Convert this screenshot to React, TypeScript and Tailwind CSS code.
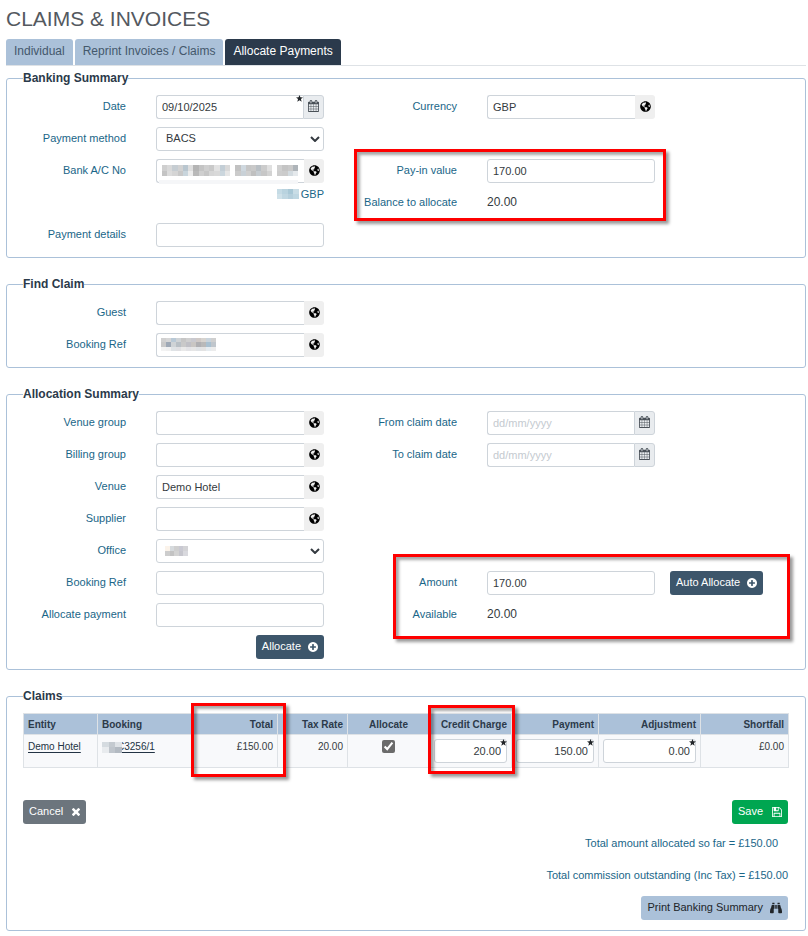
import { useState } from "react";
import type { ReactNode } from "react";
import { FaBinoculars, FaGlobeAmericas } from "react-icons/fa";

interface IconProps {
  className?: string;
}

interface Claim {
  entity: string;
  booking: string;
  total: string;
  taxRate: string;
  allocate: boolean;
  creditCharge: string;
  payment: string;
  adjustment: string;
  shortfall: string;
}

const claims: Claim[] = [
  {
    entity: "Demo Hotel",
    booking: "C3256/1",
    total: "£150.00",
    taxRate: "20.00",
    allocate: true,
    creditCharge: "20.00",
    payment: "150.00",
    adjustment: "0.00",
    shortfall: "£0.00",
  },
];

const tabs = ["Individual", "Reprint Invoices / Claims", "Allocate Payments"];

const inputClass =
  "block h-6 w-full min-w-0 rounded-[3px] border border-[#ced4da] bg-white px-[5px] pb-px text-[11px] text-[#343a40] outline-none placeholder:text-[#c4cad0]";
const cellClass = "border border-[#dee2e6] px-1";

function CalendarIcon({ className }: IconProps) {
  return (
    <svg viewBox="0 0 1664 1792" fill="currentColor" className={className} aria-hidden="true">
      <path d="M128 1664h288v-288h-288v288zm352 0h320v-288h-320v288zm-352-352h288v-320h-288v320zm352 0h320v-320h-320v320zm-352-384h288v-288h-288v288zm736 736h320v-288h-320v288zm-384-736h320v-288h-320v288zm768 736h288v-288h-288v288zm-384-352h320v-320h-320v320zm-352-864v-288q0-13-9.5-22.5t-22.5-9.5h-64q-13 0-22.5 9.5t-9.5 22.5v288q0 13 9.5 22.5t22.5 9.5h64q13 0 22.5-9.5t9.5-22.5zm736 864h288v-320h-288v320zm-384-384h320v-288h-320v288zm384 0h288v-288h-288v288zm32-480v-288q0-13-9.5-22.5t-22.5-9.5h-64q-13 0-22.5 9.5t-9.5 22.5v288q0 13 9.5 22.5t22.5 9.5h64q13 0 22.5-9.5t9.5-22.5zm384-64v1280q0 52-38 90t-90 38h-1408q-52 0-90-38t-38-90v-1280q0-52 38-90t90-38h128v-96q0-66 47-113t113-47h64q66 0 113 47t47 113v96h384v-96q0-66 47-113t113-47h64q66 0 113 47t47 113v96h128q52 0 90 38t38 90z" />
    </svg>
  );
}

function FloppyIcon({ className }: IconProps) {
  return (
    <svg viewBox="128 128 1536 1536" fill="currentColor" className={className} aria-hidden="true">
      <path d="M512 1536h768v-384h-768v384zm896 0h128v-896q0-14-10-38.5t-20-34.5l-281-281q-10-10-34-20t-39-10v416q0 40-28 68t-68 28h-576q-40 0-68-28t-28-68v-416h-128v1280h128v-416q0-40 28-68t68-28h832q40 0 68 28t28 68v416zm-384-928v-320q0-13-9.5-22.5t-22.5-9.5h-192q-13 0-22.5 9.5t-9.5 22.5v320q0 13 9.5 22.5t22.5 9.5h192q13 0 22.5-9.5t9.5-22.5zm640 32v928q0 40-28 68t-68 28h-1344q-40 0-68-28t-28-68v-1344q0-40 28-68t68-28h928q40 0 88 20t76 48l280 280q28 28 48 76t20 88z" />
    </svg>
  );
}

function TimesIcon({ className }: IconProps) {
  return (
    <svg viewBox="302 366 1188 1188" fill="currentColor" className={className} aria-hidden="true">
      <path d="M1490 1322q0 40-28 68l-136 136q-28 28-68 28t-68-28l-294-294-294 294q-28 28-68 28t-68-28l-136-136q-28-28-28-68t28-68l294-294-294-294q-28-28-28-68t28-68l136-136q28-28 68-28t68 28l294 294 294-294q28-28 68-28t68 28l136 136q28 28 28 68t-28 68l-294 294 294 294q28 28 28 68z" />
    </svg>
  );
}

function PlusCircleIcon({ className }: IconProps) {
  return (
    <svg viewBox="128 128 1536 1536" fill="currentColor" className={className} aria-hidden="true">
      <path d="M1344 960v-128q0-26-19-45t-45-19h-256v-256q0-26-19-45t-45-19h-128q-26 0-45 19t-19 45v256h-256q-26 0-45 19t-19 45v128q0 26 19 45t45 19h256v256q0 26 19 45t45 19h128q26 0 45-19t19-45v-256h256q26 0 45-19t19-45zm320-64q0 209-103 385.5t-279.5 279.5-385.5 103-385.5-103-279.5-279.5-103-385.5 103-385.5 279.5-279.5 385.5-103 385.5 103 279.5 279.5 103 385.5z" />
    </svg>
  );
}

// Blocks that hide a private value. Each row is a list of colours.
function Mosaic({ rows, className }: { rows: string[][]; className: string }) {
  return (
    <div className={`flex flex-col ${className}`} aria-hidden="true">
      {rows.map((row, i) => (
        <div key={i} className="flex flex-1">
          {row.map((color, j) => (
            <div key={j} className="flex-1" style={{ backgroundColor: color }} />
          ))}
        </div>
      ))}
    </div>
  );
}

function Panel({ title, className = "", children }: { title: string; className?: string; children: ReactNode }) {
  return (
    <fieldset className={`min-w-0 rounded-[3px] border border-[#abc1d9] pt-[9px] pr-[17px] pb-[10px] pl-4 ${className}`}>
      <legend className="text-xs leading-4 font-bold text-[#2b3a4a]">{title}</legend>
      {children}
    </fieldset>
  );
}

function FormGrid({ children }: { children: ReactNode }) {
  return <div className="grid grid-cols-[133fr_168fr_163fr_168fr_133fr] gap-y-2">{children}</div>;
}

function Label({ htmlFor, className, children }: { htmlFor: string; className: string; children: ReactNode }) {
  return (
    <label htmlFor={htmlFor} className={`h-6 pr-[30px] text-right text-[11px] leading-[22px] whitespace-nowrap text-[#1a6688] ${className}`}>
      {children}
    </label>
  );
}

function LookupInput({ id, value = "", children }: { id: string; value?: string; children?: ReactNode }) {
  return (
    <div className="relative flex h-6 w-full">
      <input id={id} defaultValue={value} className={`${inputClass} rounded-r-none border-r-0`} />
      <button type="button" aria-label="Look up" className="flex w-5 shrink-0 items-center justify-center rounded-r-[3px] bg-[#efefef] pb-[2px] text-black">
        <FaGlobeAmericas className="size-[11px]" />
      </button>
      {children}
    </div>
  );
}

function DateInput({ id, value = "", required = false }: { id: string; value?: string; required?: boolean }) {
  return (
    <div className="relative flex h-6 w-full">
      <input id={id} defaultValue={value} placeholder="dd/mm/yyyy" className={`${inputClass} rounded-r-none border-r-0`} />
      {required && <Star className="right-[21px]" />}
      <button type="button" aria-label="Open calendar" className="flex w-[21px] shrink-0 items-center justify-center rounded-r-[3px] border border-[#ced4da] bg-[#e9ecef] pb-[2px] text-[#495057]">
        <CalendarIcon className="h-3 w-[11px]" />
      </button>
    </div>
  );
}

function Select({ id, options, children }: { id: string; options: string[]; children?: ReactNode }) {
  return (
    <div className="relative h-6 w-full">
      <select id={id} className={`${inputClass} appearance-none pl-[9px]`}>
        {options.map((option) => (
          <option key={option}>{option}</option>
        ))}
      </select>
      <svg viewBox="0 0 10 6" className="pointer-events-none absolute top-[9px] right-1 h-[6px] w-[10px]" fill="none" stroke="#343a40" strokeWidth="2" aria-hidden="true">
        <path d="M1 1l4 4 4-4" />
      </svg>
      {children}
    </div>
  );
}

function Star({ className }: IconProps) {
  return (
    <svg viewBox="0 0 10 10" className={`pointer-events-none absolute top-0 size-[7px] ${className}`} fill="#212529" aria-hidden="true">
      <path d="M5 0l1.3 3.3 3.7.2-2.9 2.3 1 3.7L5 7.5 1.900 9.500l1-3.700L0 3.500l3.700-.2z" />
    </svg>
  );
}

// Red frame drawn over the form
function Highlight({ className }: IconProps) {
  return (
    <div className={`pointer-events-none absolute z-10 border-[3px] border-[#fe0000] shadow-[3px_3px_3px_rgba(0,0,0,0.4),inset_3px_3px_3px_rgba(0,0,0,0.35)] ${className}`} />
  );
}

function Button({ className, children }: { className: string; children: ReactNode }) {
  return (
    <button type="button" className={`flex h-6 shrink-0 items-center rounded-[3px] px-[6px] pb-px text-[11px] whitespace-nowrap ${className}`}>
      {children}
    </button>
  );
}

export default function App() {
  const [activeTab, setActiveTab] = useState("Allocate Payments");

  return (
    <div className="bg-white pt-[6px] pr-[2px] pb-[5px] pl-[6px] font-['Liberation_Sans',Arial,sans-serif] text-[#343a40]">
      <h1 className="text-[21px] leading-[26px] text-[#54595f]">CLAIMS &amp; INVOICES</h1>

      <div role="tablist" className="mt-[7px] flex gap-[2px] border-b border-[#dee2e6] text-xs">
        {tabs.map((tab) => (
          <button
            key={tab}
            role="tab"
            type="button"
            aria-selected={tab === activeTab}
            onClick={() => setActiveTab(tab)}
            className={`h-[26px] rounded-t-[3px] px-2 pb-[2px] ${
              tab === activeTab ? "bg-[#2b3a4c] text-white" : "bg-[#abc1d9] text-[#44586c]"
            }`}
          >
            {tab}
          </button>
        ))}
      </div>

      <Panel title="Banking Summary" className="mt-1">
        <FormGrid>
          <Label htmlFor="date" className="col-start-1 row-start-1">Date</Label>
          <div className="col-start-2 row-start-1">
            <DateInput id="date" value="09/10/2025" required />
          </div>
          <Label htmlFor="currency" className="col-start-3 row-start-1">Currency</Label>
          <div className="col-start-4 row-start-1">
            <LookupInput id="currency" value="GBP" />
          </div>

          <Label htmlFor="method" className="col-start-1 row-start-2">Payment method</Label>
          <div className="col-start-2 row-start-2">
            <Select id="method" options={["BACS", "Cheque"]} />
          </div>

          <Label htmlFor="account" className="col-start-1 row-start-3">Bank A/C No</Label>
          <div className="col-start-2 row-span-2 row-start-3 flex flex-col items-end">
            <LookupInput id="account">
              <Mosaic
                className="absolute top-[6px] left-[6px] h-[11px] w-[136px]"
                rows={[
                  ["#cfcfcf", "#d9d9d9", "#c6cdd2", "#d2d2d2", "#b9c6cf", "#dedede", "#b4b4b4", "#c4c4c4", "#cfcfcf", "#c9c9c9", "#e2e2e2", "#c3ced6", "#d9d9d9", "#fff", "#c2c2c2", "#cfd8df", "#c6c6c6", "#c9c9c9", "#b9bfc4", "#ccc", "#e0e0e0", "#fff", "#d0d0d0", "#c4c4c4", "#c9c9c9", "#aeb4b9"],
                  ["#c4c4c4", "#dcdcdc", "#d5d5d5", "#c8c8c8", "#c9d5dc", "#ececec", "#b9b9b9", "#cfcfcf", "#c6c6c6", "#d6d6d6", "#d9d9d9", "#cbd6dd", "#e6e6e6", "#fff", "#cbcbcb", "#c9d1d7", "#d0d0d0", "#c0c0c0", "#c6ccd1", "#c7c7c7", "#d3d3d3", "#fff", "#cdcdcd", "#cbcbcb", "#d3dbe0", "#e5e9ec"],
                ]}
              />
              <div className="absolute top-[21px] left-[3px] h-1 w-[139px] bg-[#f5f6f8]" />
            </LookupInput>
            <div className="mt-1 flex h-[14px] items-center text-[11px] leading-[14px] text-[#1a6688]">
              <Mosaic
                className="relative -mr-[9px] h-[10px] w-[22px]"
                rows={[
                  ["#c5dbe5", "#b9d3df", "#a9c8d6", "#c9dde6"],
                  ["#cfe1e9", "#c0d7e2", "#b5cfdc", "#bfd7e2"],
                ]}
              />
              C GBP
            </div>
          </div>

          <Label htmlFor="payIn" className="col-start-3 row-start-3">Pay-in value</Label>
          <div className="col-start-4 row-start-3">
            <input id="payIn" defaultValue="170.00" className={inputClass} />
          </div>
          <Label htmlFor="balance" className="col-start-3 row-start-4">Balance to allocate</Label>
          <output id="balance" className="col-start-4 row-start-4 text-xs leading-[22px]">20.00</output>
          <div className="pointer-events-none relative col-span-2 col-start-3 row-span-2 row-start-3">
            <Highlight className="-top-[10px] -right-[11px] -bottom-[6px] left-[30px]" />
          </div>

          <Label htmlFor="details" className="col-start-1 row-start-5">Payment details</Label>
          <div className="col-start-2 row-start-5">
            <input id="details" className={inputClass} />
          </div>
        </FormGrid>
      </Panel>

      <Panel title="Find Claim" className="mt-[18px]">
        <FormGrid>
          <Label htmlFor="guest" className="col-start-1">Guest</Label>
          <div className="col-start-2">
            <LookupInput id="guest" />
          </div>
          <Label htmlFor="findRef" className="col-start-1">Booking Ref</Label>
          <div className="col-start-2">
            <LookupInput id="findRef">
              <Mosaic
                className="absolute top-[5px] left-[5px] h-[13px] w-[55px]"
                rows={[
                  ["#d0d0d0", "#d6d6d6", "#b9c9d6", "#cfd3d6", "#c6c6c6", "#cfcfcf", "#c9c9cf", "#cfc9c6", "#d6d3cf", "#c9d3db", "#cfcfcf"],
                  ["#c9c9c9", "#9fa9b6", "#cfd3d6", "#b9c0c6", "#c9c9c9", "#c0c0c6", "#c9c6c3", "#b0b0b3", "#b9b9b9", "#a9c0d0", "#c0c6cc"],
                  ["#f3f3f3", "#f0f0f0", "#dfe3e6", "#e0e0e3", "#e9e9e9", "#e3e3e6", "#e6e6e6", "#e0e3e6", "#e3e3e3", "#e6ecf0", "#ececec"],
                ]}
              />
            </LookupInput>
          </div>
        </FormGrid>
      </Panel>

      <Panel title="Allocation Summary" className="mt-[18px]">
        <FormGrid>
          <Label htmlFor="venueGroup" className="col-start-1 row-start-1">Venue group</Label>
          <div className="col-start-2 row-start-1">
            <LookupInput id="venueGroup" />
          </div>
          <Label htmlFor="fromDate" className="col-start-3 row-start-1">From claim date</Label>
          <div className="col-start-4 row-start-1">
            <DateInput id="fromDate" />
          </div>

          <Label htmlFor="billingGroup" className="col-start-1 row-start-2">Billing group</Label>
          <div className="col-start-2 row-start-2">
            <LookupInput id="billingGroup" />
          </div>
          <Label htmlFor="toDate" className="col-start-3 row-start-2">To claim date</Label>
          <div className="col-start-4 row-start-2">
            <DateInput id="toDate" />
          </div>

          <Label htmlFor="venue" className="col-start-1 row-start-3">Venue</Label>
          <div className="col-start-2 row-start-3">
            <LookupInput id="venue" value="Demo Hotel" />
          </div>
          <Label htmlFor="supplier" className="col-start-1 row-start-4">Supplier</Label>
          <div className="col-start-2 row-start-4">
            <LookupInput id="supplier" />
          </div>
          <Label htmlFor="office" className="col-start-1 row-start-5">Office</Label>
          <div className="col-start-2 row-start-5">
            <Select id="office" options={[""]}>
              <Mosaic
                className="pointer-events-none absolute top-[7px] left-[9px] h-[10px] w-[23px]"
                rows={[
                  ["#fbf3ea", "#d6dadd", "#cfcfcf", "#c9c9d2", "#d3d3d6"],
                  ["#cdcdcd", "#c3c3c3", "#d3d3d3", "#c6c6cd", "#d9d9de"],
                ]}
              />
            </Select>
          </div>

          <Label htmlFor="bookingRef" className="col-start-1 row-start-6">Booking Ref</Label>
          <div className="col-start-2 row-start-6">
            <input id="bookingRef" className={inputClass} />
          </div>
          <Label htmlFor="amount" className="col-start-3 row-start-6">Amount</Label>
          <div className="col-start-4 row-start-6">
            <input id="amount" defaultValue="170.00" className={inputClass} />
          </div>
          <div className="col-start-5 row-start-6 flex pl-[15px]">
            <Button className="gap-[7px] bg-[#3d566b] text-white">
              Auto Allocate
              <PlusCircleIcon className="size-[10px]" />
            </Button>
          </div>

          <Label htmlFor="allocatePayment" className="col-start-1 row-start-7">Allocate payment</Label>
          <div className="col-start-2 row-start-7">
            <input id="allocatePayment" className={inputClass} />
          </div>
          <Label htmlFor="available" className="col-start-3 row-start-7">Available</Label>
          <output id="available" className="col-start-4 row-start-7 text-xs leading-[22px]">20.00</output>
          <div className="pointer-events-none relative col-span-3 col-start-3 row-span-2 row-start-6">
            <Highlight className="-top-[17px] -right-[2px] -bottom-[12px] left-[69px]" />
          </div>

          <div className="col-start-2 row-start-8 flex justify-end">
            <Button className="gap-[7px] bg-[#3d566b] text-white">
              Allocate
              <PlusCircleIcon className="size-[10px]" />
            </Button>
          </div>
        </FormGrid>
      </Panel>

      <Panel title="Claims" className="mt-[18px]">
        <table className="w-full table-fixed border-collapse text-[10px]">
          <colgroup>
            <col className="w-[74px]" />
            <col className="w-[95px]" />
            <col className="w-[85px]" />
            <col className="w-[70px]" />
            <col className="w-[82px]" />
            <col className="w-[82px]" />
            <col className="w-[87px]" />
            <col className="w-[102px]" />
            <col className="w-[88px]" />
          </colgroup>
          <thead>
            <tr className="h-[21px] bg-[#abc1d9] text-right whitespace-nowrap text-[#2b3a4a]">
              <th className={`${cellClass} text-left`}>Entity</th>
              <th className={`${cellClass} text-left`}>Booking</th>
              <th className={`${cellClass} relative`}>
                Total
                <Highlight className="-top-[11px] -right-[9px] -left-[2px] h-[74px]" />
              </th>
              <th className={cellClass}>Tax Rate</th>
              <th className={`${cellClass} text-center`}>Allocate</th>
              <th className={`${cellClass} relative`}>
                Credit Charge
                <Highlight className="-top-[9px] -right-[4px] -left-[2px] h-[69px]" />
              </th>
              <th className={cellClass}>Payment</th>
              <th className={cellClass}>Adjustment</th>
              <th className={cellClass}>Shortfall</th>
            </tr>
          </thead>
          <tbody>
            {claims.map((claim) => (
              <tr key={claim.booking} className="h-[33px] bg-[#f8f9fb] text-right align-top leading-3">
                <td className={`${cellClass} pt-[6px] text-left`}>
                  <a href="#entity" className="text-[#234] underline underline-offset-2">{claim.entity}</a>
                </td>
                <td className={`${cellClass} pt-[6px] text-left`}>
                  <a href="#booking" className="flex items-center text-[#234] underline underline-offset-2">
                    <Mosaic
                      className="relative -mr-[5px] h-[11px] w-5"
                      rows={[
                        ["#d5dbe0", "#c4cad0", "#dfe3e7"],
                        ["#e8ebee", "#bfc5cc", "#b3bac2"],
                      ]}
                    />
                    {claim.booking}
                  </a>
                </td>
                <td className={`${cellClass} pt-[6px]`}>{claim.total}</td>
                <td className={`${cellClass} pt-[6px]`}>{claim.taxRate}</td>
                <td className={`${cellClass} pt-[5px]`}>
                  <input type="checkbox" defaultChecked={claim.allocate} aria-label="Allocate" className="mx-auto block size-[13px] accent-[#6b6b6b]" />
                </td>
                {[
                  ["Credit Charge", claim.creditCharge],
                  ["Payment", claim.payment],
                  ["Adjustment", claim.adjustment],
                ].map(([name, value]) => (
                  <td key={name} className={`${cellClass} py-1`}>
                    <div className="relative">
                      <input aria-label={name} defaultValue={value} className={`${inputClass} text-right`} />
                      <Star className="right-0" />
                    </div>
                  </td>
                ))}
                <td className={`${cellClass} pt-[6px]`}>{claim.shortfall}</td>
              </tr>
            ))}
          </tbody>
        </table>

        <div className="mt-8 flex justify-between">
          <Button className="gap-[9px] bg-[#6c757d] text-white">
            Cancel
            <TimesIcon className="size-2" />
          </Button>
          <Button className="gap-[9px] bg-[#00a651] text-white">
            Save
            <FloppyIcon className="size-[10px]" />
          </Button>
        </div>
        <div className="mt-2 flex flex-col items-end gap-2 text-[11px] text-[#1a6688]">
          <p className="h-6 pr-[10px] leading-[22px]">Total amount allocated so far = £150.00</p>
          <p className="h-6 leading-[22px]">Total commission outstanding (Inc Tax) = £150.00</p>
          <Button className="gap-[7px] bg-[#abc1d9] text-[#212529]">
            Print Banking Summary
            <FaBinoculars className="size-3" />
          </Button>
        </div>
      </Panel>
    </div>
  );
}
